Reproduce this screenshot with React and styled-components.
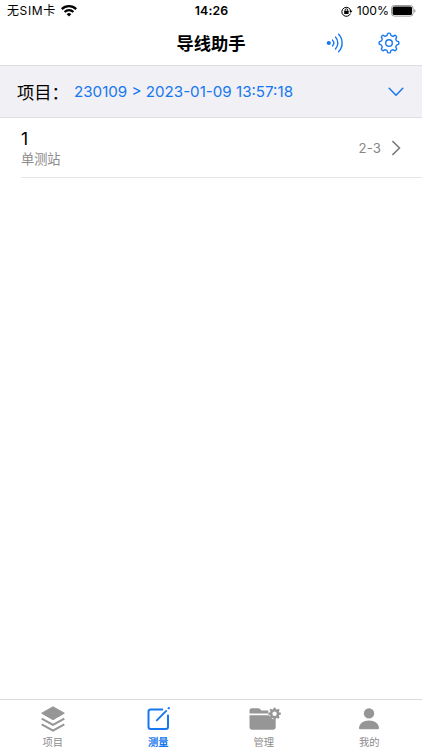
import React from 'react';
import styled, {createGlobalStyle} from 'styled-components';

const blue = '#1677f0';
const grey = '#969696';

const GlobalStyle = createGlobalStyle`
    * {
        box-sizing: border-box;
    }

    body {
        margin: 0;
        background: #fff;
        font-family: Inter, 'Noto Sans CJK SC', sans-serif;
        color: #000;
    }

    svg {
        display: block;
        flex: none;
    }
`;

const Screen = styled.div`
    display: flex;
    flex-direction: column;
    width: 100%;
    height: 100vh;
    overflow: hidden;
`;

const StatusBar = styled.div`
    display: grid;
    grid-template-columns: 1fr auto 1fr;
    align-items: center;
    height: 22px;
    padding: 0 6px 0 7px;
    line-height: 22px;
`;

const StatusSide = styled.div`
    display: flex;
    align-items: center;
    justify-content: ${props => props.$end ? 'flex-end' : 'flex-start'};
    gap: ${props => props.$end ? '2px' : '5px'};
    white-space: nowrap;
`;

const Carrier = styled.span`
    font-size: 12px;
    letter-spacing: .6px;
`;

const Clock = styled.span`
    font-weight: 600;
    font-size: 12.3px;
    letter-spacing: .15px;
`;

const Percent = styled.span`
    margin-left: 2px;
    font-size: 12.2px;
`;

const NavBar = styled.header`
    display: grid;
    grid-template-columns: 1fr auto 1fr;
    align-items: center;
    height: 44px;
    border-bottom: 1px solid #dedee0;
`;

const Title = styled.h1`
    grid-column: 2;
    margin: 0;
    font-size: 17.3px;
    line-height: 43px;
    font-weight: 700;
`;

const NavActions = styled.div`
    display: flex;
    align-items: center;
    justify-content: flex-end;
    gap: 35px;
    padding: 0 22px 2px 0;
`;

const ProjectBar = styled.div`
    display: flex;
    align-items: center;
    height: 52px;
    padding: 0 18px 0 17px;
    background: #f0f0f5;
    border-bottom: 1px solid #dfdfe3;
`;

const ProjectLabel = styled.span`
    width: 57px;
    font-size: 17.3px;
    white-space: nowrap;
`;

const ProjectName = styled.span`
    flex: 1;
    font-size: 15.15px;
    color: ${blue};
    white-space: nowrap;
`;

const List = styled.main`
    flex: 1;
    padding-left: 21px;
`;

const Row = styled.div`
    display: flex;
    align-items: center;
    height: 60px;
    padding-right: 21px;
    border-bottom: 1px solid #e6e6e6;
`;

const RowText = styled.div`
    flex: 1;
    padding-top: 3px;
`;

const RowTitle = styled.div`
    font-size: 17.5px;
    line-height: 20px;
`;

const RowSub = styled.div`
    font-size: 13.2px;
    line-height: 20px;
    color: #8b8b8b;
`;

const RowValue = styled.span`
    margin-right: 11px;
    font-size: 13.2px;
    letter-spacing: .1px;
    color: #858585;
`;

const TabBar = styled.nav`
    display: grid;
    grid-template-columns: repeat(4, 1fr);
    height: 51px;
    border-top: 1px solid #d9d9d9;
`;

const Tab = styled.div`
    display: flex;
    flex-direction: column;
    align-items: center;
    padding-top: 6px;
    font-size: 10.3px;
    line-height: 15px;
    font-weight: ${props => props.$active ? 700 : 400};
    color: ${props => props.$active ? blue : '#8c8c8c'};
`;

const TabIcon = styled.div`
    display: flex;
    justify-content: center;
    height: 29px;
    color: ${props => props.$active ? blue : grey};
`;

// closed path of a gear, its corners rounded off with quadratic curves
const gearPath = (cx, cy, outer, inner, teeth, top = .2, foot = .3) => {
    const step = Math.PI * 2 / teeth;
    const pts = [];
    for (let i = 0; i < teeth; i++) {
        const a = i * step - Math.PI / 2;
        [[-foot, inner], [-top, outer], [top, outer], [foot, inner]].forEach(([k, r]) => {
            pts.push([cx + Math.cos(a + k * step) * r, cy + Math.sin(a + k * step) * r]);
        });
    }
    const lerp = (p, q, t) => [p[0] + (q[0] - p[0]) * t, p[1] + (q[1] - p[1]) * t];
    const fmt = p => p.map(n => n.toFixed(2)).join(' ');
    return pts.map((p, i) => {
        const prev = pts[(i + pts.length - 1) % pts.length];
        const next = pts[(i + 1) % pts.length];
        return `${i ? 'L' : 'M'}${fmt(lerp(p, prev, .4))}Q${fmt(p)} ${fmt(lerp(p, next, .4))}`;
    }).join('') + 'Z';
};

const WifiIcon = () => (
    <svg width="16" height="12" viewBox="0 0 16 12" fill="none" stroke="#000" strokeWidth="2.2">
        <path d="M.8 4.1a10.2 10.2 0 0 1 14.4 0"/>
        <path d="M3.6 7a6.2 6.2 0 0 1 8.8 0"/>
        <path d="M8 11.6L5.7 9.2a3.3 3.3 0 0 1 4.6 0Z" fill="#000" stroke="none"/>
    </svg>
);

const LockIcon = () => (
    <svg width="12" height="11" viewBox="0 0 12 11" fill="none" stroke="#000">
        <path d="M9.5 7.6A4.5 4.5 0 1 1 9.8 5" strokeWidth="1"/>
        <path d="M8.2 4.8h3.2L9.8 6.9Z" fill="#000" stroke="none"/>
        <rect x="3.2" y="4.8" width="4.4" height="3.2" rx=".5" fill="#000" stroke="none"/>
        <path d="M4.1 5V4.1a1.3 1.3 0 0 1 2.6 0V5" strokeWidth=".9"/>
    </svg>
);

const BatteryIcon = () => (
    <svg width="25" height="12" viewBox="0 0 25 12">
        <rect x=".5" y=".5" width="21.6" height="10.6" rx="2.8" fill="none" stroke="#999"/>
        <rect x="1.6" y="1.6" width="19.4" height="8.4" rx="1.6"/>
        <path d="M23.2 4v3.8q1.3-.6 1.3-1.9T23.2 4Z" fill="#999"/>
    </svg>
);

const SignalIcon = () => (
    <svg width="17" height="20" viewBox="0 0 17 20" fill="none" stroke={blue} strokeWidth="1.4" strokeLinecap="round">
        <circle cx="2.8" cy="10" r="2.1" fill={blue} stroke="none"/>
        <path d="M6.5 7.1a4.3 4.3 0 0 1 0 5.8"/>
        <path d="M9.5 4.1a8.6 8.6 0 0 1 0 11.8"/>
        <path d="M12.6 1.2a12.8 12.8 0 0 1 0 17.6"/>
    </svg>
);

const SettingsIcon = () => (
    <svg width="22" height="22" viewBox="0 0 22 22" fill="none" stroke={blue} strokeWidth="1.4" strokeLinejoin="round">
        <path d={gearPath(11, 11, 10, 7.8, 8, .19, .27)}/>
        <circle cx="11" cy="11" r="3.3"/>
    </svg>
);

const DownIcon = () => (
    <svg width="16" height="10" viewBox="0 0 16 10" fill="none" stroke={blue} strokeWidth="1.5" strokeLinecap="round" strokeLinejoin="round">
        <path d="M1.2 1.3L8 8.2l6.8-6.9"/>
    </svg>
);

const NextIcon = () => (
    <svg width="9" height="16" viewBox="0 0 9 16" fill="none" stroke="#777" strokeWidth="1.5">
        <path d="M.4 1L7.5 8 .4 15"/>
    </svg>
);

const LayersIcon = () => (
    <svg width="24" height="27" viewBox="0 0 24 27" fill="none" stroke="currentColor" strokeWidth="2.1" strokeLinejoin="round">
        <path d="M12 .8L23.3 7.2 12 13.7.7 7.2Z" fill="currentColor" strokeWidth="1"/>
        <path d="M.7 12.6L12 18.9l11.3-6.3"/>
        <path d="M.7 18.4L12 24.7l11.3-6.3"/>
    </svg>
);

const MeasureIcon = () => (
    <svg width="24" height="25" viewBox="0 0 24 25" fill="none" stroke="currentColor" strokeWidth="2" strokeLinecap="round">
        <path d="M16.2 3.5H4.8A2.3 2.3 0 0 0 2.5 5.8v14.9A2.3 2.3 0 0 0 4.8 23h14.9a2.3 2.3 0 0 0 2.3-2.3V9.5"/>
        <path d="M10.8 14.3L20.2 4.9" strokeWidth="1.9"/>
        <path d="M22.7 2.2l.1-.1" strokeWidth="2.2"/>
    </svg>
);

const ManageIcon = () => (
    <svg width="34" height="25" viewBox="0 0 34 25" fill="currentColor">
        <g transform="translate(2 0)">
            <path d="M.5 7.6V4.6Q.5 2.2 2.9 2.2h6.2q1.2 0 2 .9l1.2 1.3h7.2q-.5 1.5 0 3.2Z"/>
            <path d="M.5 9.2h19.8q1.5 4.4 6.4 4.4v7.7q0 2.4-2.4 2.4H2.9Q.5 23.7.5 21.3Z"/>
            <path fillRule="evenodd" d={gearPath(25.6, 7.7, 6.4, 4.8, 8, .22, .3) + 'M23.4 7.7a2.2 2.2 0 1 0 4.4 0a2.2 2.2 0 1 0-4.4 0Z'}/>
        </g>
    </svg>
);

const PersonIcon = () => (
    <svg width="20" height="25" viewBox="0 0 20 25" fill="currentColor">
        <circle cx="10" cy="7.4" r="5.2"/>
        <path d="M0 22.2C.2 17.4 4.3 14.4 10 14.4s9.8 3 10 7.8q0 1-1.3 1H1.3Q0 23.2 0 22.2Z"/>
    </svg>
);

const tabs = [
    {label: '项目', Icon: LayersIcon},
    {label: '测量', Icon: MeasureIcon, active: true},
    {label: '管理', Icon: ManageIcon},
    {label: '我的', Icon: PersonIcon},
];

const stations = [
    {name: '1', type: '单测站', value: '2-3'},
];

const App = () => (
    <Screen>
        <GlobalStyle/>
        <StatusBar>
            <StatusSide>
                <Carrier>无SIM卡</Carrier>
                <WifiIcon/>
            </StatusSide>
            <Clock>14:26</Clock>
            <StatusSide $end>
                <LockIcon/>
                <Percent>100%</Percent>
                <BatteryIcon/>
            </StatusSide>
        </StatusBar>
        <NavBar>
            <Title>导线助手</Title>
            <NavActions>
                <SignalIcon/>
                <SettingsIcon/>
            </NavActions>
        </NavBar>
        <ProjectBar>
            <ProjectLabel>项目：</ProjectLabel>
            <ProjectName>230109 &gt; 2023-01-09 13:57:18</ProjectName>
            <DownIcon/>
        </ProjectBar>
        <List>
            {stations.map(({name, type, value}) => (
                <Row key={name}>
                    <RowText>
                        <RowTitle>{name}</RowTitle>
                        <RowSub>{type}</RowSub>
                    </RowText>
                    <RowValue>{value}</RowValue>
                    <NextIcon/>
                </Row>
            ))}
        </List>
        <TabBar>
            {tabs.map(({label, Icon, active}) => (
                <Tab key={label} $active={active}>
                    <TabIcon $active={active}>
                        <Icon/>
                    </TabIcon>
                    {label}
                </Tab>
            ))}
        </TabBar>
    </Screen>
);

export default App;
